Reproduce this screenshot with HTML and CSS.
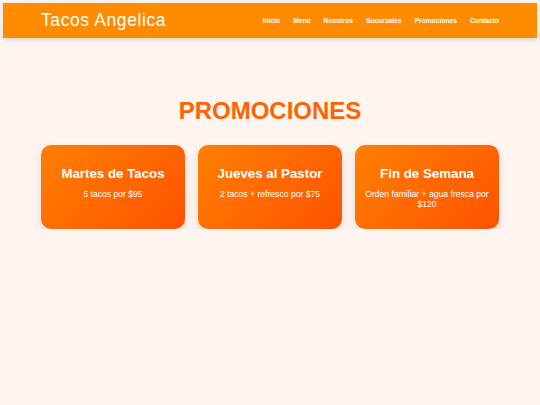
FILE: index.html
```html
<!DOCTYPE html>
<html lang="es">
<head>
<meta charset="utf-8">
<title>Tacos Angelica</title>
<link rel="stylesheet" href="styles.css">
</head>
<body>
<header class="site-header">
  <div class="header-inner">
    <div class="logo">Tacos Angelica</div>
    <nav class="nav">
      <a href="#">Inicio</a>
      <a href="#">Menú</a>
      <a href="#">Nosotros</a>
      <a href="#">Sucursales</a>
      <a href="#">Promociones</a>
      <a href="#">Contacto</a>
    </nav>
  </div>
</header>
<main class="promos">
  <h2 class="promos-title">PROMOCIONES</h2>
  <div class="cards">
    <div class="card">
      <h3 class="card-title">Martes de Tacos</h3>
      <p class="card-text">5 tacos por $95</p>
    </div>
    <div class="card">
      <h3 class="card-title">Jueves al Pastor</h3>
      <p class="card-text">2 tacos + refresco por $75</p>
    </div>
    <div class="card">
      <h3 class="card-title">Fin de Semana</h3>
      <p class="card-text">Orden familiar + agua fresca por $120</p>
    </div>
  </div>
</main>
</body>
</html>
```
FILE: styles.css
```css
* { box-sizing: border-box; }
html, body { margin: 0; padding: 0; }
body {
  background: #fff5f0;
  font-family: "Liberation Sans", Arial, sans-serif;
  padding-top: 3px;
}
.site-header {
  margin: 0 3px;
  height: 35px;
  background: #ff8c00;
  box-shadow: 0 2px 5px rgba(0,0,0,0.15);
}
.header-inner {
  width: 458px;
  height: 100%;
  display: flex;
  align-items: center;
  justify-content: space-between;
  margin-left: 38px;
}
.logo {
  color: #fff;
  font-size: 17.5px;
  letter-spacing: 0.6px;
  font-weight: normal;
}
.nav {
  display: flex;
  gap: 13px;
}
.nav a {
  color: #fff;
  text-decoration: none;
  font-weight: bold;
  font-size: 6.7px;
}
.promos {
  width: 458px;
  margin: 0 auto;
  padding-top: 59px;
}
.promos-title {
  margin: 0 0 20px;
  text-align: center;
  color: #ff6200;
  font-size: 24px;
  font-weight: bold;
  line-height: 28px;
}
.cards {
  display: grid;
  grid-template-columns: repeat(3, 1fr);
  gap: 13px;
}
.card {
  background: linear-gradient(135deg, #ff8000, #ff5200);
  border-radius: 10px;
  padding: 21px 7px 19px;
  text-align: center;
  color: #fff;
  box-shadow: 0 4px 10px rgba(0,0,0,0.12);
  min-height: 84px;
}
.card-title {
  margin: 0 0 8px;
  font-size: 13.3px;
  font-weight: bold;
  line-height: 15px;
}
.card-text {
  margin: 0;
  font-size: 8.6px;
  line-height: 10px;
}
```
